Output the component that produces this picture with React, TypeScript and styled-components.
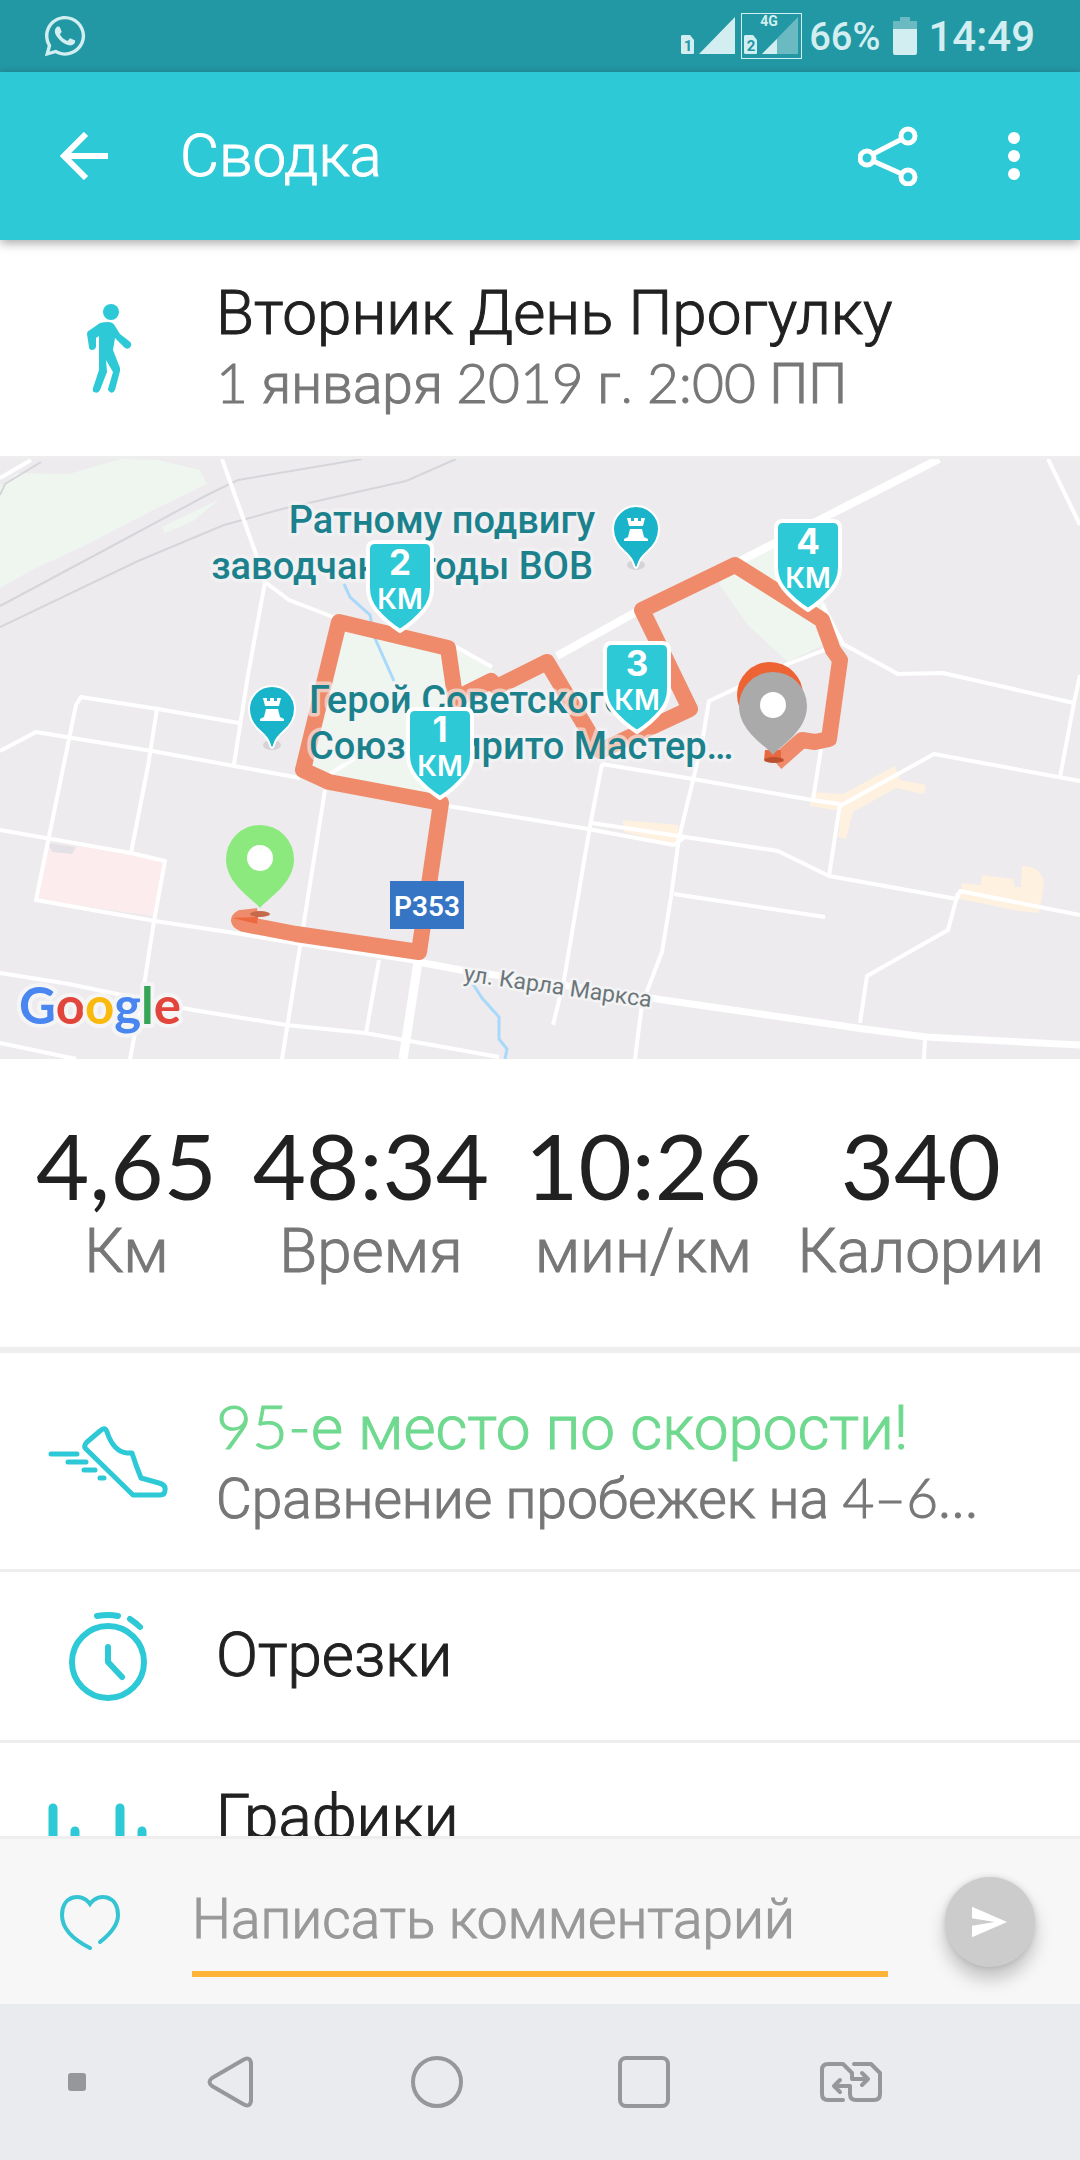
import React from "react";
import styled, { createGlobalStyle, css } from "styled-components";
import { FaWhatsapp } from "react-icons/fa";

const GlobalStyle = createGlobalStyle`
  *, *::before, *::after { box-sizing: border-box; }
  body { margin: 0; background: #fff; }
  button, input { font: inherit; color: inherit; }
  button { border: 0; padding: 0; background: none; cursor: pointer; }
  svg { display: block; }
`;

const teal = "#2dc9d6";
const ink = "#212121";
const muted = "#777";
const navGrey = "#96979a";
const textFont = `Roboto, "Noto Sans", sans-serif`;
const digitFont = `Lato, Roboto, sans-serif`;

/* A weight between Light and Regular */
const bookWeight = css`
  font-weight: 300;
  -webkit-text-stroke: 1px currentColor;
`;

const Screen = styled.div`
  display: flex;
  flex-direction: column;
  height: 100vh;
  overflow: hidden;
  background: #fff;
  color: ${ink};
  font-family: ${textFont};
`;

/* Status bar */
const StatusBar = styled.div`
  display: flex;
  flex: none;
  align-items: center;
  height: 72px;
  padding: 0 45px 0 42px;
  background: #2398a5;
  color: #d2eef0;
`;
const StatusRight = styled.div`
  display: flex;
  align-items: center;
  margin-left: auto;
`;
const Signal = styled.div<{ $boxed?: boolean }>`
  display: flex;
  height: 46px;
  margin-right: ${(p) => (p.$boxed ? 7 : 4)}px;
  border: ${(p) => (p.$boxed ? "1px solid #d2eef0" : "1px solid transparent")};
`;
const Percent = styled.span`
  margin-right: 13px;
  font-size: 38px;
  font-weight: 500;
  line-height: 52px;
  padding-top: 2px;
`;
const Clock = styled.time`
  margin-left: 11px;
  padding-top: 2px;
  font-size: 42px;
  font-weight: 500;
  line-height: 52px;
`;

/* App bar */
const AppBar = styled.header`
  position: relative;
  z-index: 1;
  display: flex;
  flex: none;
  align-items: center;
  height: 168px;
  padding: 0 48px;
  background: ${teal};
  color: #fff;
  box-shadow: 0 3px 10px rgba(0, 0, 0, 0.35);
`;
const BarButton = styled.button`
  display: grid;
  place-items: center;
  width: 72px;
  height: 96px;
`;
const BarTitle = styled.h1`
  flex: 1;
  margin: 0 0 0 60px;
  font-size: 60px;
  ${bookWeight}
  line-height: 72px;
`;
const BarActions = styled.div`
  display: flex;
  gap: 54px;
  margin-right: -18px;
`;

/* Scrolling content */
const Content = styled.main`
  flex: 1;
  min-height: 0;
  overflow: hidden;
`;
const Row = styled.section<{ $height?: number }>`
  display: grid;
  grid-template-columns: 120px 1fr;
  column-gap: 48px;
  align-items: center;
  width: 100%;
  height: ${(p) => p.$height ?? 219}px;
  padding: 0 48px;
  border-bottom: 3px solid #eee;
  text-align: left;
`;
const RowText = styled.div`
  min-width: 0;
  padding-bottom: 2px;
`;
const RowTitle = styled.h2<{ $good?: boolean }>`
  margin: 0;
  color: ${(p) => (p.$good ? "#6fd98f" : ink)};
  font-size: 62px;
  ${bookWeight}
  line-height: 72px;
  white-space: nowrap;
`;
const RowNote = styled.p`
  margin: 0;
  overflow: hidden;
  color: ${muted};
  font-size: 55px;
  ${bookWeight}
  line-height: 66px;
  text-overflow: ellipsis;
  white-space: nowrap;
`;
const Digits = styled.span`
  font-family: ${digitFont};
`;
const MapSvg = styled.svg`
  width: 100%;
  height: auto;
  background: #edebee;
`;

/* Totals */
const Totals = styled.dl`
  display: flex;
  justify-content: space-evenly;
  margin: 0;
  padding: 56px 0 60px;
  border-bottom: 6px solid #eee;
`;
const Total = styled.div`
  display: flex;
  flex-direction: column-reverse;
  align-items: center;
`;
const TotalValue = styled.dd`
  margin: 0;
  font-family: ${digitFont};
  font-size: 92px;
  line-height: 100px;
`;
const TotalName = styled.dt`
  color: ${muted};
  font-size: 62px;
  ${bookWeight}
  line-height: 72px;
`;

/* Comment bar */
const CommentBar = styled.form`
  display: flex;
  flex: none;
  align-items: center;
  height: 168px;
  padding: 0 45px 0 60px;
  border-top: 3px solid #eee;
  background: #f7f7f7;
`;
const CommentInput = styled.input`
  flex: 1;
  min-width: 0;
  height: 110px;
  margin: 0 57px 0 72px;
  padding: 0;
  border: 0;
  border-bottom: 6px solid #fdb438;
  outline: 0;
  background: transparent;
  font-size: 55px;
  ${bookWeight}
  &::placeholder {
    color: #999;
    opacity: 1;
    -webkit-text-stroke: 1px #999;
  }
`;
const SendButton = styled.button`
  display: grid;
  place-items: center;
  width: 90px;
  height: 90px;
  border-radius: 50%;
  background: #ccc;
  box-shadow: 0 12px 18px rgba(0, 0, 0, 0.22), 0 0 6px rgba(0, 0, 0, 0.12);
`;

/* System navigation */
const NavBar = styled.nav`
  display: grid;
  flex: none;
  grid-template-columns: 126fr repeat(4, 207fr) 126fr;
  height: 156px;
  background: #e9ebee;
`;
const NavButton = styled.button<{ $inset?: boolean }>`
  display: grid;
  place-items: center;
  padding-left: ${(p) => (p.$inset ? 28 : 0)}px;
`;

const SimCard = ({ n }: { n: string }) => (
  <g>
    <path d="M3 21 h8 l4 5 v13 q0 1 -1 1 h-10 q-2 0 -2 -1 v-17z" fill="#d2eef0" />
    <text x="9" y="37" textAnchor="middle" fontFamily="Roboto" fontSize="15" fontWeight="700" fill="#2398a5">{n}</text>
  </g>
);

const TowerPin = ({ x, y }: { x: number; y: number }) => (
  <g transform={`translate(${x} ${y})`}>
    <ellipse cx="0" cy="35" rx="9" ry="5" fill="#d5d3d8" />
    <path d="M0 38 Q-2 37 -2 35 Q-4 28 -11 22 Q-23 12 -23 -1 A23 23 0 0 1 23 -1 Q23 12 11 22 Q4 28 2 35 Q2 37 0 38z" fill="#19b4c9" stroke="#fff" strokeWidth="2" />
    <path d="M-9 -12 h4 v3 h3 v-3 h4 v3 h3 v-3 h4 l-2 8 h-14z M-6 -1 h12 l2 8 l4 2 v2 h-24 v-2 l4 -2z" fill="#fff" />
  </g>
);

const KmShield = ({ x, y, n }: { x: number; y: number; n: number }) => (
  <g transform={`translate(${x} ${y})`}>
    <path
      d="M-25 2 H25 Q32 2 32 9 V48 Q32 60 24 70 Q14 82 0 91 Q-14 82 -24 70 Q-32 60 -32 48 V9 Q-32 2 -25 2z"
      fill={teal}
      stroke="#fff"
      strokeWidth="4"
      strokeLinejoin="round"
    />
    <g fill="#fff" textAnchor="middle" fontFamily="Inter, sans-serif">
      <text x="0" y="35" fontSize="35" fontWeight="700">{n}</text>
      <text x="0" y="69" fontSize="28" fontWeight="600">КМ</text>
    </g>
  </g>
);

const MapPin = ({ x, y, color }: { x: number; y: number; color: string }) => (
  <g transform={`translate(${x} ${y})`}>
    <path d="M0 50 C-8 40 -34 26 -34 1 A34 34 0 0 1 34 1 C34 26 8 40 0 50z" fill={color} />
    <circle cx="0" cy="0" r="13" fill="#fff" />
  </g>
);

const routePath =
  "M258 457 L241 459 Q236 462 244 465 L296 475 L419 493 L441 344 L329 323 L303 311 L339 163 L448 189 L456 244 L465 235 L491 222 L497 228 L547 203 L600 292 L690 250 L642 151 L735 106 L822 161 L833 191 L840 201 L829 280 L815 283 L802 281 L776 304";

const RouteMap = () => (
  <MapSvg viewBox="0 0 1080 600" role="img" aria-label="Карта маршрута">
    <g fill="#eff6ef">
      <path d="M0 129 V28 L17 14 L69 15 L121 0 L158 1 L200 11 L207 25 L155 50 L86 86 L34 110z" />
      <path d="M162 68 L220 40 L193 62 L165 74z" />
      <path d="M344 165 L451 187 L492 210 L496 216 L461 236 L441 343 L306 315z" />
      <path d="M740 98 L778 82 L826 145 L833 181 L788 203 L747 165 L719 125z" />
    </g>
    <path d="M48 384 L84 388 L164 402 L153 457 L36 440z" fill="#fdeced" />
    <path d="M48 384 L76 388 L72 395 L52 393z" fill="#e4e1e6" />
    <g fill="#fef1e0">
      <path d="M623 361 L678 366 V386 L624 373z" />
      <path d="M812 333 L843 335 L895 307 L900 321 L926 326 L924 335 L896 329 L853 353 L846 380 L838 378 L841 352 L810 347z" />
      <path d="M962 424 L981 426 L982 416 L1013 420 L1015 428 L1021 428 L1022 407 Q1043 407 1044 426 L1039 454 L1019 452 L960 440z" />
    </g>
    <g fill="none" stroke="#d5d5da" strokeWidth="2">
      <path d="M0 36 L5 25 L41 3" />
      <path d="M0 147 L114 86 L207 36 L238 21 L362 0" />
      <path d="M0 168 L138 102 L224 66 L282 50 L406 22 L456 0" />
    </g>
    <g fill="none" stroke="#a9d9fa" strokeWidth="3">
      <path d="M344 125 L350 138 L370 156 L374 177 L394 222" />
      <path d="M473 525 L482 539 L499 558 V580 L507 590 L505 600" />
    </g>
    <g fill="none" stroke="#fff" strokeWidth="4" strokeLinejoin="round">
      <path d="M0 19 L31 1" />
      <path d="M222 0 L257 98 L265 123 L289 141 L341 161" />
      <path d="M265 123 L248 216 L234 305" />
      <path d="M239 264 L158 250 L81 238 L76 246 L36 441 L155 462 L241 475 L300 485 L418 503" />
      <path d="M0 292 L36 273 L152 292 L300 319" />
      <path d="M157 250 L148 307 L131 394" />
      <path d="M0 371 L131 394 L165 402 L154 462 L143 533 L130 600" />
      <path d="M0 514 L69 525 L193 551 L286 566 L365 574 L499 598" />
      <path d="M0 584 L76 600" />
      <path d="M325 331 L303 469 L282 600" />
      <path d="M379 501 L366 574" />
      <path d="M448 347 L540 362 L588 370 L674 386 L685 378" />
      <path d="M592 364 L685 378 L778 392 L829 417 L957 440 L960 432 L1080 456" />
      <path d="M451 185 L492 208" />
      <path d="M324 319 L355 299" />
      <path d="M1048 0 L1080 66" />
      <path d="M822 145 L843 185 L898 215 L943 214 L1074 244 L1080 216" />
      <path d="M1074 244 L1060 318" />
      <path d="M840 347 L934 295 L1080 322" />
      <path d="M840 185 L788 205 L709 242 L702 284 L679 379 L671 438 L662 493 L642 545 L635 600" />
      <path d="M602 305 L693 320 L812 341 L840 345 L829 417" />
      <path d="M821 290 L813 341" />
      <path d="M602 305 L590 367 L564 521 L553 566" />
      <path d="M674 435 L825 458" />
      <path d="M958 434 L948 471 L867 517 L860 564" />
      <path d="M925 580 L924 600" />
      <path d="M418 503 L403 600" strokeWidth="9" />
      <path d="M418 503 L461 511 L650 539 L864 570 L926 578 L1080 586" strokeWidth="7" />
      <path d="M939 0 L833 54 L740 102 L636 153 L557 197" strokeWidth="8" />
    </g>
    <path d={routePath} fill="none" stroke="#ef8b6b" strokeWidth="16" strokeLinejoin="round" />
    <path d="M232 459 L258 458 L257 465z" fill="#ed6a41" />
    <path d="M765 291 H781 V302 L764 301z" fill="#e9683f" />

    <g fontFamily={textFont} fontSize="38" fontWeight="500" fill="#1b828d" stroke="#f4f4f5" strokeOpacity="0.6" strokeWidth="7" strokeLinejoin="round" paintOrder="stroke">
      <text x="595" y="74" textAnchor="end">Ратному подвигу</text>
      <text x="593" y="120" textAnchor="end">заводчан в годы ВОВ</text>
      <text x="309" y="254">Герой Советского</text>
      <text x="309" y="300">Союза Кирито Мастер…</text>
    </g>
    <TowerPin x={636} y={71} />
    <TowerPin x={272} y={251} />

    <rect x="390" y="422" width="74" height="48" fill="#3674c4" />
    <text x="427" y="457" textAnchor="middle" fontFamily={textFont} fontSize="28" fontWeight="600" fill="#fff">Р353</text>
    <text transform="translate(463 522) rotate(8)" fontFamily={textFont} fontSize="23" fill="#6b767a" stroke="#f4f4f5" strokeWidth="5" strokeLinejoin="round" paintOrder="stroke">
      ул. Карла Маркса
    </text>

    <KmShield x={400} y={81} n={2} />
    <KmShield x={440} y={248} n={1} />
    <KmShield x={637} y={182} n={3} />
    <KmShield x={808} y={60} n={4} />

    <ellipse cx="260" cy="455" rx="10" ry="3" fill="#c4694a" />
    <MapPin x={260} y={399} color="#8ce97d" />
    <circle cx="770" cy="236" r="33" fill="#ee6333" />
    <ellipse cx="774" cy="301" rx="10" ry="3" fill="#bb5030" />
    <MapPin x={773} y={246} color="#aaa" />

    <text x="19" y="565" fontFamily={digitFont} fontSize="51" fontWeight="700" stroke="#f5f5f6" strokeWidth="8" strokeLinejoin="round" paintOrder="stroke">
      <tspan fill="#4a86f0">G</tspan>
      <tspan fill="#e2453b">o</tspan>
      <tspan fill="#f9b90d">o</tspan>
      <tspan fill="#4a86f0">g</tspan>
      <tspan fill="#36a557">l</tspan>
      <tspan fill="#e2453b">e</tspan>
    </text>
  </MapSvg>
);

const WalkIcon = () => (
  <svg width="120" height="120" viewBox="0 0 120 120" fill={teal} aria-hidden="true">
    <circle cx="63" cy="24" r="8" />
    <path d="M60 34 Q65 34 67 38 L72 46 L81 53 Q84 55 83 58 Q81 62 77 60 L67 50 L65 62 L72 80 Q72 82 72 83 L67 102 Q65 106 62 104 Q60 103 60 101 L65 84 L58 72 L59 84 L52 102 Q50 106 46 104 Q44 103 45 100 L51 82 V48 L48 50 L48 59 Q47 62 44 62 Q41 62 41 59 L39 46 Q39 43 42 42 L52 35 Q56 34 60 34z" />
  </svg>
);

const ShoeIcon = () => (
  <svg width="120" height="120" viewBox="0 0 120 120" fill="none" stroke={teal} strokeWidth="5" strokeLinecap="round" strokeLinejoin="round" aria-hidden="true">
    <path d="M52 30 Q57 25 59 31 C63 43 69 51 79 52 H84 L88 64 L93 77 L111 82 Q118 84 117 89 Q117 94 112 94 H85 L38 48 Q35 45 39 41z" />
    <path d="M3 53 H29 M20 61 H38 M36 69 H47 M52 77 H56" />
  </svg>
);

const StopwatchIcon = () => (
  <svg width="120" height="120" viewBox="0 0 120 120" fill="none" stroke={teal} strokeWidth="6" strokeLinecap="round" strokeLinejoin="round" aria-hidden="true">
    <circle cx="60" cy="66" r="36" />
    <path d="M60 51 V66 L74 81 M49 20 Q60 18 70 20 M82 23 Q88 27 92 31" />
  </svg>
);

const ChartIcon = () => (
  <svg width="120" height="120" viewBox="0 0 120 120" fill="none" stroke={teal} strokeWidth="9" strokeLinecap="round" aria-hidden="true">
    <path d="M5 50 V104 M27 73 V104 M72 50 V104 M94 73 V104" />
  </svg>
);

const totals = [
  { value: "4,65", name: "Км" },
  { value: "48:34", name: "Время" },
  { value: "10:26", name: "мин/км" },
  { value: "340", name: "Калории" },
];

export default function App() {
  return (
    <Screen>
      <GlobalStyle />
      <StatusBar>
        <FaWhatsapp size={46} aria-label="WhatsApp" />
        <StatusRight>
          <Signal>
            <svg width="57" height="44" viewBox="0 0 57 44">
              <SimCard n="1" />
              <path d="M20 40 L56 3 V40z" fill="#d2eef0" />
            </svg>
          </Signal>
          <Signal $boxed>
            <svg width="59" height="44" viewBox="0 0 59 44">
              <SimCard n="2" />
              <path d="M20 40 L56 3 V40z" fill="#6bbac1" />
              <path d="M20 40 L35 25 V40z" fill="#d2eef0" />
              <text x="27" y="12" textAnchor="middle" fontFamily="Roboto" fontSize="14" fontWeight="700" fill="#d2eef0">4G</text>
            </svg>
          </Signal>
          <Percent>66%</Percent>
          <svg width="24" height="38" viewBox="0 0 24 38" aria-hidden="true">
            <path d="M7 0 H17 V4 H24 V12 H0 V4 H7z" fill="#6bbac1" />
            <path d="M0 12 H24 V36 Q24 38 22 38 H2 Q0 38 0 36z" fill="#d2eef0" />
          </svg>
          <Clock>14:49</Clock>
        </StatusRight>
      </StatusBar>

      <AppBar>
        <BarButton type="button" aria-label="Назад">
          <svg width="48" height="48" viewBox="0 0 48 48" fill="none" stroke="#fff" strokeWidth="6">
            <path d="M26 2 L4 24 L26 46 M4 24 H48" />
          </svg>
        </BarButton>
        <BarTitle>Сводка</BarTitle>
        <BarActions>
          <BarButton type="button" aria-label="Поделиться">
            <svg width="60" height="60" viewBox="0 0 60 60" fill="none" stroke="#fff" strokeWidth="5">
              <circle cx="9" cy="32" r="7" />
              <circle cx="50" cy="10" r="7" />
              <circle cx="50" cy="51" r="7" />
              <path d="M15 28 L44 13 M15 35 L44 48" />
            </svg>
          </BarButton>
          <BarButton type="button" aria-label="Ещё">
            <svg width="12" height="48" viewBox="0 0 12 48" fill="#fff">
              <circle cx="6" cy="6" r="6" />
              <circle cx="6" cy="24" r="6" />
              <circle cx="6" cy="42" r="6" />
            </svg>
          </BarButton>
        </BarActions>
      </AppBar>

      <Content>
        <Row>
          <WalkIcon />
          <RowText>
            <RowTitle>Вторник День Прогулку</RowTitle>
            <RowNote>
              <Digits>1</Digits> января <Digits>2019</Digits> г. <Digits>2:00</Digits> ПП
            </RowNote>
          </RowText>
        </Row>
        <RouteMap />
        <Totals>
          {totals.map((t) => (
            <Total key={t.name}>
              <TotalName>{t.name}</TotalName>
              <TotalValue>{t.value}</TotalValue>
            </Total>
          ))}
        </Totals>
        <Row as="button">
          <ShoeIcon />
          <RowText>
            <RowTitle $good>
              <Digits>95-</Digits>е место по скорости!
            </RowTitle>
            <RowNote>
              Сравнение пробежек на <Digits>4–6…</Digits>
            </RowNote>
          </RowText>
        </Row>
        <Row as="button" $height={171}>
          <StopwatchIcon />
          <RowText>
            <RowTitle>Отрезки</RowTitle>
          </RowText>
        </Row>
        <Row as="button" $height={153}>
          <ChartIcon />
          <RowText>
            <RowTitle>Графики</RowTitle>
          </RowText>
        </Row>
      </Content>

      <CommentBar>
        <button type="button" aria-label="Нравится">
          <svg width="60" height="60" viewBox="0 0 60 60" fill="none" stroke="#35c4d2" strokeWidth="4" strokeLinecap="round">
            <path d="M30 56 C16 49 2 38 2 23 C2 3 22 0 30 12 C38 0 58 3 58 23 C58 34 49 43 40 50" />
          </svg>
        </button>
        <CommentInput aria-label="Комментарий" placeholder="Написать комментарий" />
        <SendButton type="button" aria-label="Отправить">
          <svg width="36" height="32" viewBox="0 0 38 32" fill="#fff">
            <path d="M0 0 L37 16 L0 32 V20 L24 16 L0 12z" />
          </svg>
        </SendButton>
      </CommentBar>

      <NavBar aria-label="Системная навигация">
        <NavButton type="button" aria-label="Скрыть панель" $inset>
          <svg width="18" height="18"><rect width="18" height="18" rx="3" fill={navGrey} /></svg>
        </NavButton>
        <NavButton type="button" aria-label="Назад">
          <svg width="46" height="52" viewBox="0 0 46 52" fill="none" stroke={navGrey} strokeWidth="4" strokeLinejoin="round">
            <path d="M36 4 Q43 0 44 7 V45 Q43 52 36 48 L5 30 Q0 26 5 22z" />
          </svg>
        </NavButton>
        <NavButton type="button" aria-label="Домой">
          <svg width="52" height="52" fill="none" stroke={navGrey} strokeWidth="4"><circle cx="26" cy="26" r="24" /></svg>
        </NavButton>
        <NavButton type="button" aria-label="Недавние">
          <svg width="52" height="52" fill="none" stroke={navGrey} strokeWidth="4"><rect x="2" y="2" width="48" height="48" rx="6" /></svg>
        </NavButton>
        <NavButton type="button" aria-label="Сменить SIM">
          <svg width="64" height="42" viewBox="0 0 64 42" fill="none" stroke={navGrey} strokeWidth="4" strokeLinecap="round" strokeLinejoin="round">
            <path d="M24 39 H9 Q3 39 3 33 V9 Q3 3 9 3 H24 L33 12 V18 H48 M43 12 L49 18 L43 24" />
            <path d="M35 3 H52 L61 12 V33 Q61 39 55 39 H37 Q31 39 31 33 V25 H16 M21 19 L15 25 L21 31" />
          </svg>
        </NavButton>
      </NavBar>
    </Screen>
  );
}
